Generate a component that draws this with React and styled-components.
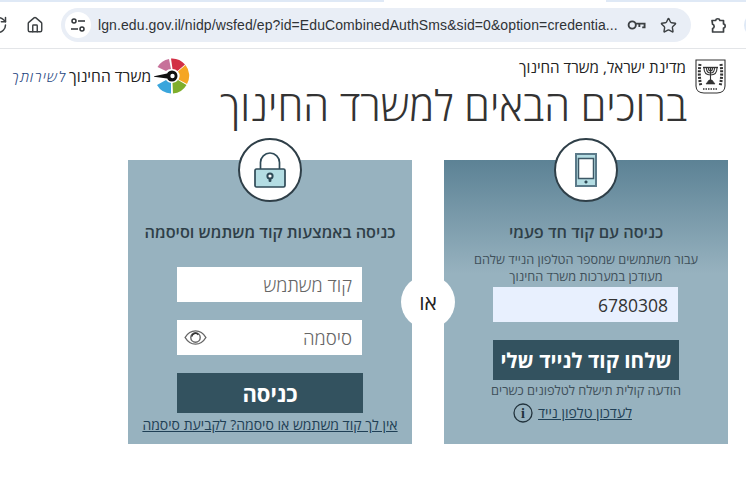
import React from 'react';
import styled, { createGlobalStyle } from 'styled-components';
import { RotateCw, House, Star } from 'lucide-react';

const Global = createGlobalStyle`
  html, body {
    margin: 0;
    padding: 0;
    height: 100%;
    background: #fff;
    overflow: hidden;
  }
  * { box-sizing: border-box; }
  body {
    font-family: "Open Sans", "Noto Sans", "Liberation Sans", sans-serif;
  }
`

const Page = styled.div`
  width: 746px;
  height: 478px;
  overflow: hidden;
  display: flex;
  flex-direction: column;
`

const TabStrip = styled.div`
  height: 2px;
  background: #dfe9f6;
  display: flex;
  justify-content: flex-end;
  padding-right: 140px;
`

const ActiveTab = styled.div`
  width: 222px;
  height: 2px;
  background: #fff;
`

const Toolbar = styled.div`
  height: 47px;
  border-bottom: 1px solid #e3e5e8;
  display: flex;
  align-items: center;
  color: #3c4043;
  overflow: hidden;
`

const ReloadSlot = styled.div`
  width: 26px;
  margin-left: -12px;
  margin-right: 18px;
  display: flex;
`

const HomeSlot = styled.div`
  width: 20px;
  display: flex;
  justify-content: center;
  margin-right: 17px;
`

const AddressBar = styled.div`
  width: 630px;
  height: 34px;
  border-radius: 17px;
  background: #e9eef6;
  display: flex;
  align-items: center;
  padding: 0 14px 0 4px;
  flex-shrink: 0;
`

const TuneButton = styled.div`
  width: 26px;
  height: 26px;
  border-radius: 50%;
  background: #fff;
  display: flex;
  align-items: center;
  justify-content: center;
  margin-right: 7px;
`

const Url = styled.div`
  font-family: "Liberation Sans", Arial, sans-serif;
  font-size: 14px;
  color: #2f3337;
  flex: 1;
  white-space: nowrap;
  overflow: hidden;
  letter-spacing: 0.1px;
`

const KeySlot = styled.div`
  display: flex;
  margin-right: 14px;
`

const ExtensionSlot = styled.div`
  display: flex;
  margin-left: 18px;
`

const ProfileDot = styled.div`
  width: 24px;
  height: 24px;
  border-radius: 50%;
  background: #dfe9f6;
  margin-left: 15px;
  flex-shrink: 0;
`

const Header = styled.header`
  height: 111px;
  display: flex;
  align-items: flex-start;
  padding: 8px 20px 0 9px;
`

const Logo = styled.div`
  width: 181px;
  display: flex;
  align-items: center;
  flex-shrink: 0;
  height: 36px;
  margin-top: 1px;
`

const LogoScript = styled.span`
  font-size: 14.5px;
  font-style: italic;
  font-weight: 300;
  color: #27477f;
  width: 60px;
  flex-shrink: 0;
  text-align: center;
  white-space: nowrap;
  letter-spacing: 1.2px;
`

const LogoName = styled.span`
  font-size: 15.6px;
  color: #222;
  white-space: nowrap;
  width: 82px;
  flex-shrink: 0;
  text-align: center;
  margin-right: 3px;
`

const HeaderText = styled.div`
  flex: 1;
  display: flex;
  flex-direction: column;
  align-items: flex-end;
  padding-right: 9px;
`

const StateName = styled.div`
  direction: rtl;
  font-size: 15.2px;
  line-height: 20px;
  color: #222;
`

const Title = styled.h1`
  direction: rtl;
  margin: 6px -1px 0 0;
  font-size: 41.6px;
  line-height: 44px;
  font-weight: 300;
  color: #333;
  white-space: nowrap;
`

const Emblem = styled.div`
  width: 31px;
  margin-top: 2px;
  flex-shrink: 0;
`

const Cards = styled.main`
  position: relative;
  display: flex;
  gap: 32px;
  margin-left: 128px;
  width: 600px;
`

const Card = styled.section`
  position: relative;
  width: 284px;
  height: 284px;
  direction: rtl;
  display: flex;
  flex-direction: column;
  align-items: center;
  background: ${(p) =>
    p.$gradient ? 'linear-gradient(180deg, #5c8295 0%, #97b2bf 40%)' : '#97b2bf'};
  padding-top: 60px;
`

const IconCircle = styled.div`
  position: absolute;
  top: -22px;
  left: 110px;
  width: 64px;
  height: 64px;
  border-radius: 50%;
  border: 2px solid #2f3f48;
  background: #fff;
  display: flex;
  align-items: center;
  justify-content: center;
`

const CardTitle = styled.h2`
  margin: 0;
  font-size: 16.3px;
  line-height: 24px;
  font-weight: 600;
  color: #2f3f48;
  white-space: nowrap;
`

const Hint = styled.p`
  margin: 7px 0 0;
  font-size: 12.7px;
  line-height: 17px;
  text-align: center;
  color: #3f505a;
  white-space: nowrap;
`

const Field = styled.div`
  width: 185px;
  height: 35px;
  margin-top: ${(p) => p.$top}px;
  margin-right: 1px;
  background: ${(p) => (p.$filled ? '#e8f0fe' : '#fff')};
  display: flex;
  align-items: center;
  justify-content: space-between;
  padding: 0 10px 0 7px;
  font-size: ${(p) => (p.$filled ? 17.5 : 18.6)}px;
  font-weight: ${(p) => (p.$filled ? 400 : 300)};
  color: ${(p) => (p.$filled ? '#333' : '#666')};
`

const NumberValue = styled.span`
  direction: ltr;
`

const SubmitButton = styled.button`
  width: 186px;
  height: 40px;
  margin-top: 18px;
  border: 0;
  padding: 0;
  background: #33525f;
  color: #fff;
  font-family: inherit;
  font-size: ${(p) => p.$size}px;
  font-weight: 700;
  white-space: nowrap;
`

const Note = styled.div`
  margin-top: 1px;
  font-size: 12.8px;
  line-height: 18px;
  color: #3f505a;
  white-space: nowrap;
`

const CardLink = styled.a`
  font-size: 14px;
  line-height: 18px;
  color: #1f3f55;
  text-decoration: underline;
  white-space: nowrap;
`

const LoginLink = styled(CardLink)`
  margin-top: 3px;
`

const UpdateRow = styled.div`
  display: flex;
  align-items: center;
  gap: 5px;
  margin-top: 4px;
  margin-right: 27px;
`

const OrBadge = styled.div`
  position: absolute;
  left: 273px;
  top: 115px;
  width: 54px;
  height: 54px;
  border-radius: 50%;
  background: #fff;
  display: flex;
  align-items: center;
  justify-content: center;
  font-size: 21px;
  color: #222;
`

const TuneIcon = () => (
  <svg width="16" height="16" viewBox="0 0 16 16" fill="none" stroke="#2f3337" strokeWidth="1.5">
    <circle cx="4" cy="4" r="2" />
    <path d="M8 4h7M1 12h7" />
    <circle cx="12" cy="12" r="2" />
  </svg>
);

const KeyIcon = () => (
  <svg width="19" height="12" viewBox="0 0 20 12" fill="none" stroke="#3c4043" strokeWidth="2">
    <circle cx="5.5" cy="6" r="3.8" />
    <path d="M9.5 4.5h9v4h-2.5M13 5v3" />
  </svg>
);

const ExtensionIcon = () => (
  <svg width="20" height="20" viewBox="0 0 20 20" fill="none" stroke="#3c4043" strokeWidth="1.7" strokeLinejoin="round">
    <path d="M3 5.5h3.6a2.2 2.2 0 0 1 4.3 0h3.6v3.4a2.2 2.2 0 0 1 0 4.3v3.8H3.6v-3.5a2.2 2.2 0 0 0 0-4.2z" />
  </svg>
);

const WheelLogo = () => (
  <svg width="36" height="36" viewBox="-18 -18 36 36">
    <path d="M-3 -17A17 17 0 0 0 -14.5 -9L-6 -5A7 7 0 0 1 -1 -7z" fill="#c7729a" />
    <path d="M-1 -17.5A17 17 0 0 1 13 -11.5L5.5 -5A7 7 0 0 0 0.5 -7z" fill="#d22f45" />
    <path d="M13.5 -11A17 17 0 0 1 15 8L6.5 3.5A7 7 0 0 0 6 -4.5z" fill="#f5a623" />
    <path d="M14.5 9A17 17 0 0 1 1 17.5L0.5 7A7 7 0 0 0 6 4z" fill="#7fae2b" />
    <path d="M-1 17.5A17 17 0 0 1 -15 9L-6 4A7 7 0 0 0 -1 7z" fill="#3ba6dc" />
    <path d="M-19 0.5L-5 -2.5L-5 2.5z" fill="#111" />
    <circle cx="0" cy="0" r="5.5" fill="#111" />
    <circle cx="0.5" cy="0" r="2.2" fill="#fff" />
  </svg>
);

const StateEmblem = () => (
  <svg width="31" height="36" viewBox="0 0 31 36" fill="none" stroke="#333">
    <path d="M1 1h29v26c0 5-4 7-8 7H9c-4 0-8-2-8-7z" strokeWidth="1.1" />
    <path d="M5 5c-1 7-1 15 1 22M26 5c1 7 1 15-1 22" strokeWidth="3" strokeDasharray="2 1.2" />
    <path d="M15.5 8v14M9 9c0 6 3 7 6.5 7S22 15 22 9M11.5 9c0 4 2 5 4 5s4-1 4-5M13.5 9c0 2 1 3 2 3s2-1 2-3" strokeWidth="1.1" />
    <path d="M8 8.5h15" strokeWidth="1.4" />
    <path d="M11 25l3-4h3l3 4z" fill="#333" strokeWidth="0.6" />
    <path d="M8 30h15" strokeWidth="1.6" strokeDasharray="1.5 1" />
  </svg>
);

const LockIcon = () => (
  <svg width="32" height="36" viewBox="0 0 32 36" fill="none" stroke="#2f4a57" strokeWidth="1.7">
    <path d="M6.5 17V10.5a9.5 9.5 0 0 1 19 0V17" />
    <rect x="1" y="17" width="30" height="18" rx="1.5" fill="#b4dde3" />
    <circle cx="16" cy="24" r="2.6" fill="#fff" strokeWidth="2" />
    <path d="M15 26.5h2v3h-2z" fill="#2f4a57" strokeWidth="0.8" />
  </svg>
);

const PhoneIcon = () => (
  <svg width="22" height="34" viewBox="0 0 22 34" fill="none" stroke="#5b7a89" strokeWidth="2">
    <rect x="1" y="1" width="20" height="32" fill="#b4dde3" />
    <rect x="3.5" y="5.5" width="15" height="20" fill="#fff" stroke="#3d5866" strokeWidth="1.5" />
    <circle cx="11" cy="29" r="1.3" fill="#2f4a57" stroke="#2f4a57" strokeWidth="0.5" />
  </svg>
);

const EyeIcon = () => (
  <svg width="23" height="17" viewBox="0 0 24 18" fill="none" stroke="#666" strokeWidth="1.5">
    <path d="M1 9c3-5 7-7 11-7s8 2 11 7c-3 5-7 7-11 7S4 14 1 9z" />
    <circle cx="12" cy="9" r="5" />
    <path d="M8 8a4 4 0 0 1 7-2" stroke="#333" />
  </svg>
);

const InfoIcon = () => (
  <svg width="20" height="20" viewBox="0 0 20 20" fill="none" stroke="#22333d" strokeWidth="1.3">
    <circle cx="10" cy="10" r="9" />
    <text x="10" y="15" textAnchor="middle" fontFamily="Liberation Serif, serif" fontWeight="700" fontSize="14" fill="#22333d" stroke="none">i</text>
  </svg>
);

const App = () => {
  return (
    <Page>
      <Global />
      <TabStrip>
        <ActiveTab />
      </TabStrip>
      <Toolbar>
        <ReloadSlot>
          <RotateCw size={20} strokeWidth={1.8} />
        </ReloadSlot>
        <HomeSlot>
          <House size={18} strokeWidth={1.9} />
        </HomeSlot>
        <AddressBar>
          <TuneButton>
            <TuneIcon />
          </TuneButton>
          <Url>lgn.edu.gov.il/nidp/wsfed/ep?id=EduCombinedAuthSms&amp;sid=0&amp;option=credentia...</Url>
          <KeySlot>
            <KeyIcon />
          </KeySlot>
          <Star size={17} strokeWidth={2} />
        </AddressBar>
        <ExtensionSlot>
          <ExtensionIcon />
        </ExtensionSlot>
        <ProfileDot />
      </Toolbar>
      <Header>
        <Logo>
          <LogoScript>לשירותך</LogoScript>
          <LogoName>משרד החינוך</LogoName>
          <WheelLogo />
        </Logo>
        <HeaderText>
          <StateName>מדינת ישראל, משרד החינוך</StateName>
          <Title>ברוכים הבאים למשרד החינוך</Title>
        </HeaderText>
        <Emblem>
          <StateEmblem />
        </Emblem>
      </Header>
      <Cards>
        <Card>
          <IconCircle>
            <LockIcon />
          </IconCircle>
          <CardTitle>כניסה באמצעות קוד משתמש וסיסמה</CardTitle>
          <Field $top={23}>קוד משתמש</Field>
          <Field $top={18}>
            סיסמה
            <EyeIcon />
          </Field>
          <SubmitButton $size={22}>כניסה</SubmitButton>
          <LoginLink>אין לך קוד משתמש או סיסמה? לקביעת סיסמה</LoginLink>
        </Card>
        <Card $gradient>
          <IconCircle>
            <PhoneIcon />
          </IconCircle>
          <CardTitle>כניסה עם קוד חד פעמי</CardTitle>
          <Hint>
            עבור משתמשים שמספר הטלפון הנייד שלהם
            <br />
            מעודכן במערכות משרד החינוך
          </Hint>
          <Field $filled $top={2}>
            <NumberValue>6780308</NumberValue>
          </Field>
          <SubmitButton $size={20.7}>שלחו קוד לנייד שלי</SubmitButton>
          <Note>הודעה קולית תישלח לטלפונים כשרים</Note>
          <UpdateRow>
            <CardLink>לעדכון טלפון נייד</CardLink>
            <InfoIcon />
          </UpdateRow>
        </Card>
        <OrBadge>או</OrBadge>
      </Cards>
    </Page>
  )
}

export default App
